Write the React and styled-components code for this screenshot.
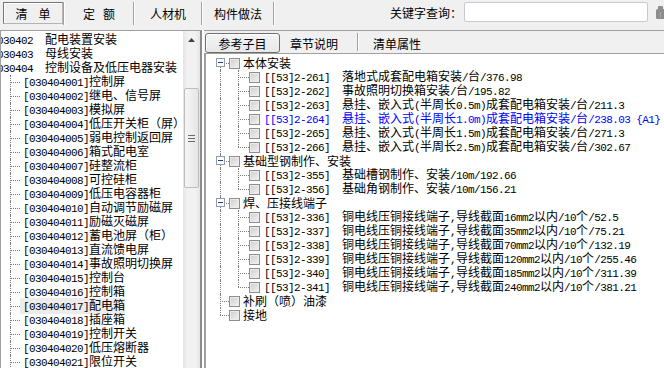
import React from 'react';
import styled, { createGlobalStyle, css } from 'styled-components';

const GlobalStyle = createGlobalStyle`
  html, body { margin: 0; padding: 0; background: #f0f0f0; }
  body {
    width: 664px;
    height: 368px;
    overflow: hidden;
    font-family: "Noto Sans CJK SC", "Noto Sans", sans-serif;
    font-size: 12px;
    color: #000;
  }
`;

const Window = styled.div`
  width: 664px;
  height: 368px;
  display: flex;
  flex-direction: column;
  background: #f0f0f0;
  overflow: hidden;
`;

/* ---------- toolbar ---------- */

const Toolbar = styled.div`
  height: 30px;
  flex: none;
  box-sizing: border-box;
  display: flex;
  align-items: flex-start;
  padding: 2px 0 0 3px;
`;

const ToolTab = styled.div`
  width: ${p => p.$w}px;
  height: 22px;
  box-sizing: border-box;
  display: flex;
  align-items: center;
  justify-content: center;
  border: 1px solid transparent;
  ${p => p.$active && css`
    border-color: #767676 #b4b4b4 #b4b4b4 #767676;
    box-shadow: inset 1px 1px 0 #fff;
  `}
`;

const TabText = styled.span`
  letter-spacing: ${p => p.$ls || 0}px;
  margin-right: -${p => p.$ls || 0}px;
  white-space: pre;
`;

const Etched = styled.span`
  flex: none;
  width: 1px;
  height: ${p => p.$h}px;
  background: #a0a0a0;
  border-right: 1px solid #fff;
`;

const Spacer = styled.div`
  flex: 1;
`;

const SearchLabel = styled.span`
  line-height: 22px;
  margin-right: 2px;
`;

const SearchInput = styled.input`
  width: 184px;
  height: 20px;
  box-sizing: border-box;
  border: 1px solid #c6c9d2;
  border-radius: 2px;
  background: #fff;
  margin: 0;
  padding: 0 3px;
  font: inherit;
  outline: none;
`;

const SearchIcon = styled.svg`
  flex: none;
  margin: 4px -3px 0 5px;
`;

/* ---------- panels ---------- */

const Body = styled.div`
  flex: 1;
  min-height: 0;
  display: flex;
  gap: 2px;
  background: #fff;
`;

const LeftPanel = styled.div`
  width: 202px;
  flex: none;
  box-sizing: border-box;
  display: flex;
  border-top: 1px solid #a0a0a0;
  border-left: 1px solid #a0a0a0;
  border-right: 2px solid #8c8c8c;
  background: #fff;
  overflow: hidden;
`;

const TreeArea = styled.div`
  flex: 1;
  min-width: 0;
  padding-top: 2px;
  display: flex;
  flex-direction: column;
  overflow: hidden;
`;

const Scrollbar = styled.div`
  width: 17px;
  flex: none;
  display: flex;
  flex-direction: column;
  background: linear-gradient(90deg, #e4e4e4, #f1f1f1 25%, #f1f1f1 75%, #e4e4e4);
`;

const ScrollArrow = styled.div`
  height: 17px;
  display: flex;
  align-items: center;
  justify-content: center;
`;

const Thumb = styled.div`
  margin: 40px 1px 0;
  height: 100px;
  box-sizing: border-box;
  border: 1px solid #bcbcbc;
  border-radius: 2px;
  background: linear-gradient(90deg, #f6f6f6, #e6e6e6);
  display: flex;
  align-items: center;
  justify-content: center;
`;

const RightPanel = styled.div`
  flex: 1;
  min-width: 0;
  display: flex;
  flex-direction: column;
`;

const TabBar = styled.div`
  height: 24px;
  flex: none;
  box-sizing: border-box;
  display: flex;
  align-items: flex-start;
  padding: 2px 0 0 1px;
  border-top: 1px solid #a0a0a0;
  border-bottom: 1px solid #a0a0a0;
  background: #f0f0f0;
`;

const PageTab = styled.div`
  height: 20px;
  box-sizing: border-box;
  display: flex;
  align-items: center;
  width: ${p => p.$w}px;
  padding-left: ${p => p.$pl || 0}px;
  ${p => p.$active && css`
    justify-content: center;
    border: 1px solid #6f6f6f;
    border-radius: 3px;
    background: linear-gradient(#f4f4f4, #e8e8e8);
    box-shadow: inset 1px 1px 0 #fff;
  `}
`;

const Content = styled.div`
  flex: 1;
  min-height: 0;
  border-left: 2px solid #a0a0a0;
  background: #fff;
  padding-top: 2px;
  display: flex;
  flex-direction: column;
  overflow: hidden;
`;

/* ---------- tree parts ---------- */

const Row = styled.div`
  height: 14px;
  flex: none;
  display: flex;
  align-items: center;
  line-height: 14px;
  white-space: pre;
  color: ${p => p.$color || '#000'};
`;

const Branch = styled.span`
  position: relative;
  flex: none;
  align-self: stretch;
  width: ${p => p.$w}px;
  &::before {
    content: '';
    display: ${p => (p.$up || p.$down ? 'block' : 'none')};
    position: absolute;
    left: ${p => p.$x}px;
    top: ${p => (p.$up ? 0 : 7)}px;
    bottom: ${p => (p.$down ? 0 : 7)}px;
    border-left: 1px dotted #7a7a7a;
  }
  &::after {
    content: '';
    display: ${p => (p.$h ? 'block' : 'none')};
    position: absolute;
    left: ${p => p.$x}px;
    right: 0;
    top: 7px;
    border-top: 1px dotted #7a7a7a;
  }
`;

const Expander = styled.span`
  position: absolute;
  left: ${p => p.$x - 4}px;
  top: 2px;
  width: 9px;
  height: 9px;
  box-sizing: border-box;
  border: 1px solid #8e9bb0;
  background: #fff;
  z-index: 1;
  &::after {
    content: '';
    position: absolute;
    left: 1px;
    top: 3px;
    width: 5px;
    height: 1px;
    background: #1f3f9a;
  }
`;

const Check = styled.span`
  flex: none;
  width: 11px;
  height: 11px;
  box-sizing: border-box;
  border: 1px solid #8e8e8e;
  background: linear-gradient(135deg, #cdcdcd, #f3f3f3);
  box-shadow: inset 0 0 0 1px #ececec;
`;

const Label = styled.span`
  margin-left: ${p => p.$ml || 0}px;
  padding-left: ${p => p.$pl || 0}px;
  background: ${p => (p.$sel ? '#ececec' : 'transparent')};
  white-space: pre;
`;

const Latin = styled.span`
  font-family: "Liberation Mono", "DejaVu Sans Mono", monospace;
  font-size: 11px;
  letter-spacing: -0.6px;
`;

function T({ children }) {
  return String(children)
    .split(/([\x00-\x7f]+)/)
    .filter(Boolean)
    .map((p, i) =>
      /[\x00-\x7f]/.test(p[0]) ? <Latin key={i}>{p}</Latin> : <React.Fragment key={i}>{p}</React.Fragment>
    );
}

/* ---------- data ---------- */

const chapters = ['030402  配电装置安装', '030403  母线安装', '030404  控制设备及低压电器安装'];

const items = [
  '控制屏', '继电、信号屏', '模拟屏', '低压开关柜（屏）', '弱电控制返回屏', '箱式配电室',
  '硅整流柜', '可控硅柜', '低压电容器柜', '自动调节励磁屏', '励磁灭磁屏', '蓄电池屏（柜）',
  '直流馈电屏', '事故照明切换屏', '控制台', '控制箱', '配电箱', '插座箱', '控制开关',
  '低压熔断器', '限位开关',
];

const groups = [
  {
    name: '本体安装',
    rows: [
      ['[[53]2-261]', '落地式成套配电箱安装/台/376.98'],
      ['[[53]2-262]', '事故照明切换箱安装/台/195.82'],
      ['[[53]2-263]', '悬挂、嵌入式(半周长0.5m)成套配电箱安装/台/211.3'],
      ['[[53]2-264]', '悬挂、嵌入式(半周长1.0m)成套配电箱安装/台/238.03 {A1}', true],
      ['[[53]2-265]', '悬挂、嵌入式(半周长1.5m)成套配电箱安装/台/271.3'],
      ['[[53]2-266]', '悬挂、嵌入式(半周长2.5m)成套配电箱安装/台/302.67'],
    ],
  },
  {
    name: '基础型钢制作、安装',
    rows: [
      ['[[53]2-355]', '基础槽钢制作、安装/10m/192.66'],
      ['[[53]2-356]', '基础角钢制作、安装/10m/156.21'],
    ],
  },
  {
    name: '焊、压接线端子',
    rows: [
      ['[[53]2-336]', '铜电线压铜接线端子,导线截面16mm2以内/10个/52.5'],
      ['[[53]2-337]', '铜电线压铜接线端子,导线截面35mm2以内/10个/75.21'],
      ['[[53]2-338]', '铜电线压铜接线端子,导线截面70mm2以内/10个/132.19'],
      ['[[53]2-339]', '铜电线压铜接线端子,导线截面120mm2以内/10个/255.46'],
      ['[[53]2-340]', '铜电线压铜接线端子,导线截面185mm2以内/10个/311.39'],
      ['[[53]2-341]', '铜电线压铜接线端子,导线截面240mm2以内/10个/381.21'],
    ],
  },
  { name: '补刷（喷）油漆', rows: [] },
  { name: '接地', rows: [] },
];

/* ---------- page ---------- */

export default function App() {
  return (
    <Window>
      <GlobalStyle />
      <Toolbar>
        <ToolTab $w={60} $active><TabText $ls={11}>清单</TabText></ToolTab>
        <Etched $h={23} />
        <ToolTab $w={68}><TabText $ls={8}>定额</TabText></ToolTab>
        <Etched $h={23} />
        <ToolTab $w={66}><TabText>人材机</TabText></ToolTab>
        <Etched $h={23} />
        <ToolTab $w={70}><TabText>构件做法</TabText></ToolTab>
        <Etched $h={23} />
        <Spacer />
        <SearchLabel>关键字查询：</SearchLabel>
        <SearchInput readOnly value="" />
        <SearchIcon width="14" height="14" viewBox="0 0 14 14">
          <rect x="5" y="0" width="5" height="4" rx="1" fill="#8c8c8c" />
          <rect x="3" y="3" width="10" height="10" rx="1.5" fill="#8c8c8c" />
          <rect x="7" y="6" width="1" height="6" fill="#a8a8a8" />
        </SearchIcon>
      </Toolbar>

      <Body>
        <LeftPanel>
          <TreeArea>
            {chapters.map(c => (
              <Row key={c}>
                <Label $ml={-4}><T>{c}</T></Label>
              </Row>
            ))}
            {items.map((name, i) => {
              const code = `[0304040${String(i + 1).padStart(2, '0')}]`;
              return (
                <Row key={code}>
                  <Branch $w={19} $x={9} $up $down $h />
                  <Label $pl={3} $sel={i === 16}><T>{code + name}</T></Label>
                </Row>
              );
            })}
          </TreeArea>
          <Scrollbar>
            <ScrollArrow>
              <svg width="7" height="4" viewBox="0 0 7 4">
                <path d="M0 4 L3.5 0 L7 4 Z" fill="#404040" />
              </svg>
            </ScrollArrow>
            <Thumb>
              <svg width="7" height="7" viewBox="0 0 7 7">
                <rect x="0" y="0" width="7" height="1" fill="#6a6a6a" />
                <rect x="0" y="3" width="7" height="1" fill="#6a6a6a" />
                <rect x="0" y="6" width="7" height="1" fill="#6a6a6a" />
              </svg>
            </Thumb>
          </Scrollbar>
        </LeftPanel>

        <RightPanel>
          <TabBar>
            <PageTab $w={75} $active>参考子目</PageTab>
            <PageTab $w={77} $pl={10}>章节说明</PageTab>
            <Etched $h={18} />
            <PageTab $w={80} $pl={14}>清单属性</PageTab>
          </TabBar>
          <Content>
            {groups.map((g, gi) => {
              const first = gi === 0;
              const last = gi === groups.length - 1;
              return (
                <React.Fragment key={g.name}>
                  <Row>
                    <Branch $w={23} $x={14} $up={!first} $down={!last} $h>
                      {g.rows.length > 0 && <Expander $x={14} />}
                    </Branch>
                    <Check />
                    <Label $ml={3}>{g.name}</Label>
                  </Row>
                  {g.rows.map(([code, text, blue], ri) => (
                    <Row key={code} $color={blue ? '#0000ff' : undefined}>
                      <Branch $w={23} $x={14} $up={!last} $down={!last} />
                      <Branch $w={20} $x={9} $up $down={ri < g.rows.length - 1} $h />
                      <Check />
                      <Label $ml={4}><T>{`${code}  ${text}`}</T></Label>
                    </Row>
                  ))}
                </React.Fragment>
              );
            })}
          </Content>
        </RightPanel>
      </Body>
    </Window>
  );
}
